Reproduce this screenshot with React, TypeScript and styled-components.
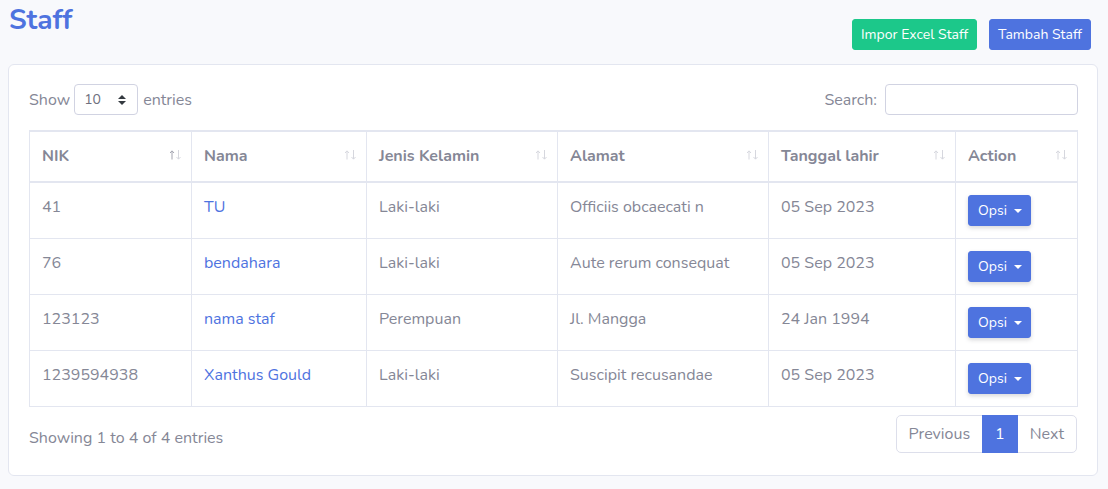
import React from 'react';
import styled, { createGlobalStyle } from 'styled-components';

const GlobalStyle = createGlobalStyle`
  html, body {
    margin: 0;
    padding: 0;
    background: #f8f9fc;
    font-family: "Nunito", Lato, "Noto Sans", sans-serif;
    color: #858796;
    font-size: 16px;
  }
  * { box-sizing: border-box; }
`;

const Page = styled.div`
  padding: 0 10px 0 8px;
`;

const Header = styled.div`
  display: flex;
  justify-content: space-between;
  align-items: flex-start;
  height: 64px;
`;

const Title = styled.h1`
  margin: 4px 0 0 1px;
  font-size: 28px;
  line-height: 1.2;
  font-weight: 700;
  color: #4e73df;
`;

const Actions = styled.div`
  display: flex;
  gap: 12px;
  margin-top: 19px;
  padding-right: 7px;
`;

const Button = styled.button<{ $variant: 'primary' | 'success' }>`
  font-family: inherit;
  font-size: 14px;
  line-height: 21px;
  padding: 4px 8px;
  border: 1px solid ${(p) => (p.$variant === 'primary' ? '#4e73df' : '#1cc88a')};
  background: ${(p) => (p.$variant === 'primary' ? '#4e73df' : '#1cc88a')};
  color: #fff;
  border-radius: 3px;
  cursor: pointer;
`;

const Card = styled.div`
  background: #fff;
  border: 1px solid #e3e6f0;
  border-radius: 6px;
  padding: 19px 20px 22px;
`;

const TopBar = styled.div`
  display: flex;
  justify-content: space-between;
  align-items: center;
  margin-bottom: 15px;
`;

const Label = styled.label`
  display: flex;
  align-items: center;
  gap: 4px;
  line-height: 24px;
`;

const SelectBox = styled.div`
  position: relative;
  width: 64px;
  height: 31px;
  border: 1px solid #d1d3e2;
  border-radius: 4px;
  padding: 4px 9px;
  font-size: 14px;
  line-height: 21px;
  color: #6e707e;
  margin-left: 0;
  margin-right: 1px;
`;

const SelectArrows = styled.svg`
  position: absolute;
  right: 11px;
  top: 10px;
`;

const SearchInput = styled.input`
  width: 193px;
  height: 31px;
  border: 1px solid #d1d3e2;
  border-radius: 4px;
  margin-left: 4px;
  margin-right: -1px;
`;

const Table = styled.table`
  width: 100%;
  border-collapse: collapse;
  table-layout: fixed;
  border: 1px solid #e3e6f0;
`;

const Th = styled.th`
  position: relative;
  text-align: left;
  font-weight: 700;
  padding: 12px 30px 13px 12px;
  line-height: 24px;
  border: 1px solid #e3e6f0;
  border-top: 2px solid #e3e6f0;
  border-bottom: 2px solid #e3e6f0;
  color: #858796;
`;

const SortIcon = styled.svg`
  position: absolute;
  top: 18px;
  right: 10px;
`;

const Td = styled.td`
  padding: 12px;
  line-height: 24px;
  vertical-align: top;
  border: 1px solid #e3e6f0;
  white-space: nowrap;
  overflow: hidden;
`;

const NameLink = styled.a`
  color: #4e73df;
  text-decoration: none;
`;

const OptButton = styled.button`
  display: inline-flex;
  align-items: center;
  font-family: inherit;
  font-size: 14px;
  line-height: 21px;
  padding: 4px 8px 4px 9px;
  border: 1px solid #4e73df;
  background: #4e73df;
  color: #fff;
  border-radius: 3px;
  box-shadow: 0 2px 4px rgba(58, 59, 69, 0.2);
  cursor: pointer;
  &::after {
    content: '';
    margin-left: 7px;
    border-top: 4.5px solid #fff;
    border-left: 4px solid transparent;
    border-right: 4px solid transparent;
  }
`;

const Footer = styled.div`
  display: flex;
  justify-content: space-between;
  align-items: flex-start;
  padding-top: 8px;
`;

const Info = styled.div`
  line-height: 24px;
  padding-top: 11px;
`;

const Pager = styled.div`
  display: flex;
`;

const PageItem = styled.span<{ $active?: boolean; $pos?: 'first' | 'last' }>`
  padding: 8px 12px;
  line-height: 20px;
  border: 1px solid ${(p) => (p.$active ? '#4e73df' : '#dddfeb')};
  background: ${(p) => (p.$active ? '#4e73df' : '#fff')};
  color: ${(p) => (p.$active ? '#fff' : '#858796')};
  margin-left: -1px;
  border-radius: ${(p) =>
    p.$pos === 'first' ? '5px 0 0 5px' : p.$pos === 'last' ? '0 5px 5px 0' : '0'};
  position: relative;
  z-index: ${(p) => (p.$active ? 1 : 0)};
`;

const SortArrows = ({ active }: { active?: boolean }) => (
  <SortIcon width="11" height="10" viewBox="0 0 11 10" fill="none" strokeWidth="1">
    <path
      d="M2 9.5 V1 M0 3 L2 0.8 L4 3"
      stroke={active ? '#a3a4b0' : '#d6d7de'}
    />
    <path d="M8.5 0 V9 M6.5 7 L8.5 9.2 L10.5 7" stroke="#d6d7de" />
  </SortIcon>
);

const columns = [
  { label: 'NIK', width: 162 },
  { label: 'Nama', width: 175 },
  { label: 'Jenis Kelamin', width: 191 },
  { label: 'Alamat', width: 211 },
  { label: 'Tanggal lahir', width: 187 },
  { label: 'Action', width: 122 },
];

const rows = [
  { nik: '41', nama: 'TU', jk: 'Laki-laki', alamat: 'Officiis obcaecati n', tgl: '05 Sep 2023' },
  { nik: '76', nama: 'bendahara', jk: 'Laki-laki', alamat: 'Aute rerum consequat', tgl: '05 Sep 2023' },
  { nik: '123123', nama: 'nama staf', jk: 'Perempuan', alamat: 'Jl. Mangga', tgl: '24 Jan 1994' },
  { nik: '1239594938', nama: 'Xanthus Gould', jk: 'Laki-laki', alamat: 'Suscipit recusandae', tgl: '05 Sep 2023' },
];

export default function App() {
  return (
    <Page>
      <GlobalStyle />
      <Header>
        <Title>Staff</Title>
        <Actions>
          <Button $variant="success">Impor Excel Staff</Button>
          <Button $variant="primary">Tambah Staff</Button>
        </Actions>
      </Header>
      <Card>
        <TopBar>
          <Label>
            Show
            <SelectBox>
              10
              <SelectArrows width="8" height="10" viewBox="0 0 8 10">
                <path d="M4 0 L8 4 H0 Z M4 10 L0 6 H8 Z" fill="#343a40" />
              </SelectArrows>
            </SelectBox>
            entries
          </Label>
          <Label>
            Search:
            <SearchInput type="search" />
          </Label>
        </TopBar>
        <Table>
          <colgroup>
            {columns.map((c) => (
              <col key={c.label} style={{ width: c.width }} />
            ))}
          </colgroup>
          <thead>
            <tr>
              {columns.map((c, i) => (
                <Th key={c.label}>
                  {c.label}
                  <SortArrows active={i === 0} />
                </Th>
              ))}
            </tr>
          </thead>
          <tbody>
            {rows.map((r) => (
              <tr key={r.nik}>
                <Td>{r.nik}</Td>
                <Td>
                  <NameLink href="#">{r.nama}</NameLink>
                </Td>
                <Td>{r.jk}</Td>
                <Td>{r.alamat}</Td>
                <Td>{r.tgl}</Td>
                <Td>
                  <OptButton>Opsi</OptButton>
                </Td>
              </tr>
            ))}
          </tbody>
        </Table>
        <Footer>
          <Info>Showing 1 to 4 of 4 entries</Info>
          <Pager>
            <PageItem $pos="first">Previous</PageItem>
            <PageItem $active>1</PageItem>
            <PageItem $pos="last">Next</PageItem>
          </Pager>
        </Footer>
      </Card>
    </Page>
  );
}
